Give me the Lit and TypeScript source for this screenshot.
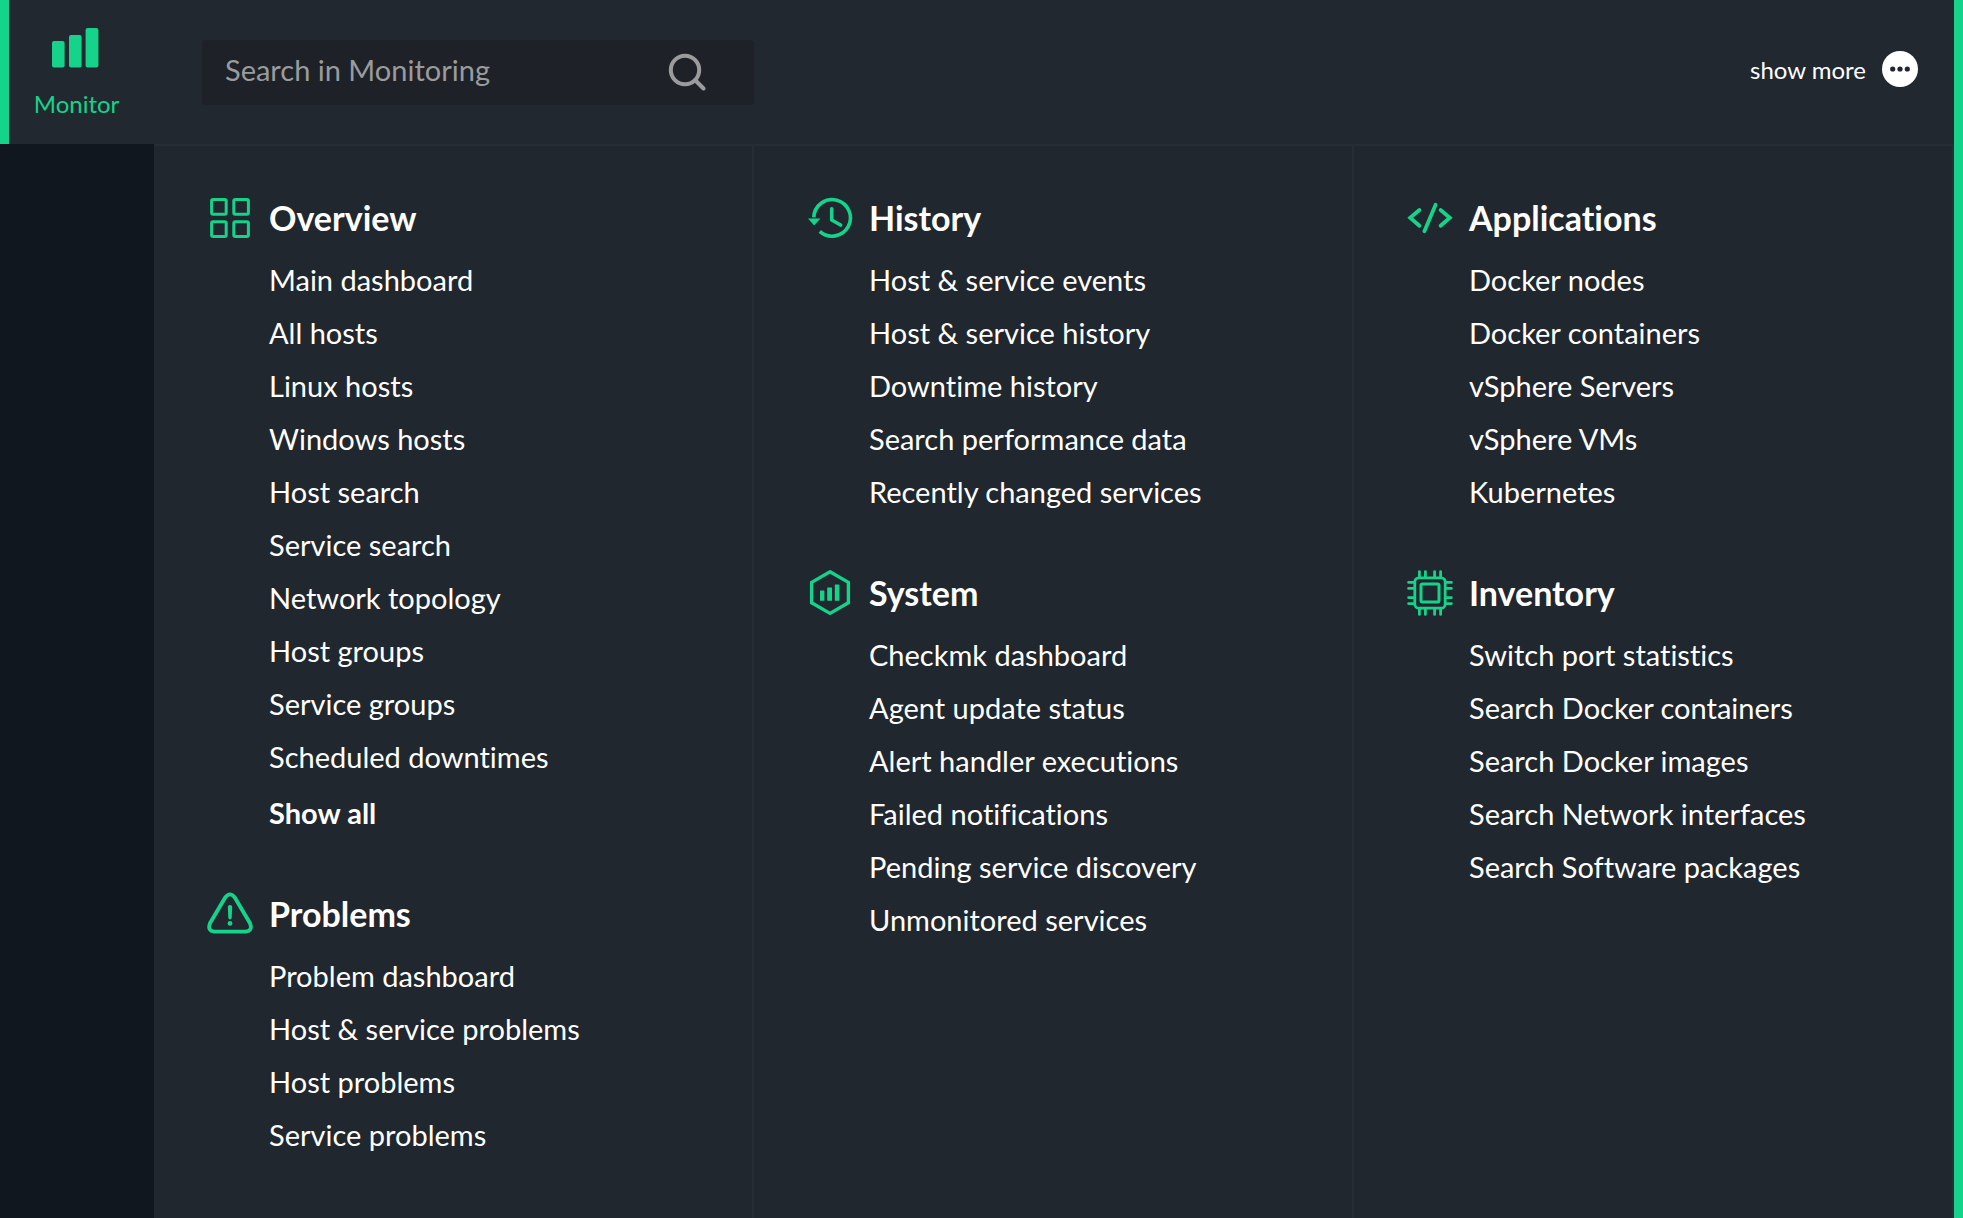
import { LitElement, html, css, svg, type SVGTemplateResult } from "lit";
import { customElement, property } from "lit/decorators.js";

interface Topic {
  title: string;
  icon: string;
  items: string[];
  showAll?: boolean;
}

const COLUMNS: Topic[][] = [
  [
    {
      title: "Overview",
      icon: "overview",
      items: [
        "Main dashboard",
        "All hosts",
        "Linux hosts",
        "Windows hosts",
        "Host search",
        "Service search",
        "Network topology",
        "Host groups",
        "Service groups",
        "Scheduled downtimes",
      ],
      showAll: true,
    },
    {
      title: "Problems",
      icon: "problems",
      items: ["Problem dashboard", "Host & service problems", "Host problems", "Service problems"],
    },
  ],
  [
    {
      title: "History",
      icon: "history",
      items: [
        "Host & service events",
        "Host & service history",
        "Downtime history",
        "Search performance data",
        "Recently changed services",
      ],
    },
    {
      title: "System",
      icon: "system",
      items: [
        "Checkmk dashboard",
        "Agent update status",
        "Alert handler executions",
        "Failed notifications",
        "Pending service discovery",
        "Unmonitored services",
      ],
    },
  ],
  [
    {
      title: "Applications",
      icon: "applications",
      items: ["Docker nodes", "Docker containers", "vSphere Servers", "vSphere VMs", "Kubernetes"],
    },
    {
      title: "Inventory",
      icon: "inventory",
      items: [
        "Switch port statistics",
        "Search Docker containers",
        "Search Docker images",
        "Search Network interfaces",
        "Search Software packages",
      ],
    },
  ],
];

const ICONS: Record<string, SVGTemplateResult> = {
  overview: svg`
    <g stroke-width="3">
      <rect x="4.6" y="4.6" width="14.6" height="14.6" rx="1.5" />
      <rect x="26.8" y="4.6" width="14.6" height="14.6" rx="1.5" />
      <rect x="4.6" y="26.8" width="14.6" height="14.6" rx="1.5" />
      <rect x="26.8" y="26.8" width="14.6" height="14.6" rx="1.5" />
    </g>`,
  problems: svg`
    <path stroke-width="3.8" d="M18.4 6.2 Q23 0.4 27.6 6.2 L43 32.2 Q46 39.8 38.6 40.6 H7.4 Q0 39.8 3 32.2 Z" />
    <path fill="currentColor" stroke="none" d="M20.8 15.8 Q20.8 14 23 14 Q25.2 14 25.2 15.8 L24.7 26.8 Q24.5 28.4 23 28.4 Q21.5 28.4 21.3 26.8 Z" />
    <circle cx="23" cy="32.4" r="2.4" fill="currentColor" stroke="none" />`,
  history: svg`
    <path stroke-width="3.6" d="M6.8 22.4 A18.3 18.3 0 1 1 12.8 36.4" />
    <path stroke-width="3.6" stroke-linecap="round" stroke-linejoin="round" d="M24.7 13.8 V25 L33.6 30" />
    <path fill="currentColor" stroke="none" d="M1 23.4 H13.4 L7.2 30.6 Z" />`,
  system: svg`
    <path stroke-width="3.4" d="M23 1.8 L41.4 12.4 V32.8 L23 43.4 L4.6 32.8 V12.4 Z" />
    <g fill="currentColor" stroke="none">
      <rect x="13" y="20.4" width="4.4" height="10.4" rx=".5" />
      <rect x="20.2" y="17.4" width="4.8" height="13.4" rx=".5" />
      <rect x="27.8" y="14.4" width="4.6" height="16.4" rx=".5" />
    </g>`,
  applications: svg`
    <g stroke-width="3.8" stroke-linecap="round" stroke-linejoin="miter">
      <path d="M12.4 15 L3.2 22.8 L12.4 30.8" />
      <path d="M33.6 15 L42.8 22.8 L33.6 30.8" />
      <path d="M28.6 9.8 L17.4 36.2" />
    </g>`,
  inventory: svg`
    <rect x="7.8" y="7.8" width="30.4" height="30.4" rx="4" stroke-width="2.8" />
    <rect x="14" y="14" width="18" height="18" rx="1.5" stroke-width="3" />
    <path stroke-width="2.8" stroke-linecap="round" d="M12.4 1.6 V7 M18.4 1.6 V7 M27.6 1.6 V7 M33.6 1.6 V7 M12.4 39 V44.4 M18.4 39 V44.4 M27.6 39 V44.4 M33.6 39 V44.4 M1.6 12.4 H7 M1.6 18.4 H7 M1.6 27.6 H7 M1.6 33.6 H7 M39 12.4 H44.4 M39 18.4 H44.4 M39 27.6 H44.4 M39 33.6 H44.4" />`,
};

@customElement("menu-topic")
export class MenuTopic extends LitElement {
  @property({ attribute: false }) topic!: Topic;

  static styles = css`
    :host {
      display: block;
    }
    .heading {
      display: flex;
      align-items: center;
      gap: 16px;
      height: 70px;
      margin: 0;
      font-size: 34px;
      font-weight: 700;
      line-height: 40px;
    }
    .icon {
      flex: none;
      width: 46px;
      height: 46px;
      color: #15d38a;
    }
    .list {
      margin: 0;
      padding: 0 0 0 62px;
      list-style: none;
    }
    .link {
      display: block;
      color: inherit;
      text-decoration: none;
      white-space: nowrap;
      line-height: 53px;
    }
    .link:hover {
      color: #15d38a;
    }
    .all {
      padding-top: 3px;
      font-weight: 700;
    }
  `;

  render() {
    const { title, icon, items, showAll } = this.topic;
    return html`
      <h2 class="heading">
        <svg class="icon" viewBox="0 0 46 46" fill="none" stroke="currentColor" aria-hidden="true">
          ${ICONS[icon]}
        </svg>
        <span>${title}</span>
      </h2>
      <ul class="list">
        ${items.map((item) => html`<li><a class="link" href="#">${item}</a></li>`)}
        ${showAll ? html`<li class="all"><a class="link" href="#">Show all</a></li>` : ""}
      </ul>
    `;
  }
}

@customElement("app-root")
export class AppRoot extends LitElement {
  static styles = css`
    :host {
      display: grid;
      grid-template-columns: 154px 1fr;
      grid-template-rows: auto 1fr;
      box-sizing: border-box;
      min-height: 100vh;
      border-right: 9px solid #15d38a;
      background: #21272e;
      color: #fff;
      font-family: Lato, "Liberation Sans", sans-serif;
      font-size: 29px;
      font-variant-ligatures: none;
    }
    .monitor {
      display: flex;
      flex-direction: column;
      align-items: center;
      gap: 20px;
      box-sizing: border-box;
      height: 144px;
      padding: 28px 10px 0 0;
      border: 0;
      border-left: 9px solid #15d38a;
      background: #21282f;
      color: #15d38a;
      font: inherit;
      font-size: 24px;
      font-variant-ligatures: none;
      line-height: 32px;
      cursor: pointer;
    }
    .bars {
      flex: none;
      width: 52px;
      height: 40px;
    }
    .header {
      display: flex;
      align-items: center;
      justify-content: space-between;
      height: 144px;
      padding: 0 36px 0 48px;
      box-sizing: border-box;
      background: #21282f;
    }
    .search {
      display: flex;
      align-items: center;
      box-sizing: border-box;
      width: 552px;
      height: 65px;
      padding: 0 48px 4px 23px;
      border-radius: 4px;
      background: #1e2228;
    }
    .field {
      flex: 1;
      min-width: 0;
      padding: 0;
      border: 0;
      outline: 0;
      background: none;
      color: #fff;
      font: inherit;
      line-height: 40px;
    }
    .field::placeholder {
      color: #9a9b9d;
      opacity: 1;
    }
    .find {
      display: flex;
      padding: 4px 0 0;
      border: 0;
      background: none;
      color: #9b9b9b;
      cursor: pointer;
    }
    .lens {
      width: 38px;
      height: 38px;
    }
    .more {
      display: flex;
      align-items: center;
      gap: 16px;
      padding: 0 0 6px;
      border: 0;
      background: none;
      color: #fff;
      font: inherit;
      font-size: 24px;
      line-height: 32px;
      cursor: pointer;
    }
    .label {
      padding-top: 2px;
    }
    .dots {
      width: 36px;
      height: 36px;
    }
    .rail {
      background: #10171e;
    }
    .columns {
      display: grid;
      grid-template-columns: repeat(3, 1fr);
      border-top: 2px solid #262d37;
    }
    .column {
      display: flex;
      flex-direction: column;
      gap: 40px;
      box-sizing: border-box;
      min-width: 0;
      padding: 37px 16px 37px 53px;
      border-right: 2px solid #262d37;
    }
  `;

  render() {
    return html`
      <button class="monitor" type="button">
        <svg class="bars" viewBox="0 0 52 40" fill="currentColor" aria-hidden="true">
          <rect x="1" y="13" width="12.6" height="26.4" rx="2" />
          <rect x="18" y="7" width="12.6" height="32.4" rx="2" />
          <rect x="34.6" y="0" width="12.8" height="39.4" rx="2" />
        </svg>
        <span>Monitor</span>
      </button>
      <header class="header">
        <form class="search" role="search" @submit=${(e: Event) => e.preventDefault()}>
          <input class="field" type="text" aria-label="Search in Monitoring" placeholder="Search in Monitoring" />
          <button class="find" type="submit" aria-label="Search">
            <svg class="lens" viewBox="0 0 38 38" fill="none" stroke="currentColor" stroke-width="4" aria-hidden="true">
              <circle cx="17" cy="17" r="14.2" />
              <path d="M27 27 L35.5 35.5" stroke-linecap="round" />
            </svg>
          </button>
        </form>
        <button class="more" type="button">
          <span class="label">show more</span>
          <svg class="dots" viewBox="0 0 36 36" aria-hidden="true">
            <circle cx="18" cy="18" r="18" fill="#fff" />
            <g fill="#21272e">
              <circle cx="10.7" cy="18" r="2.6" />
              <circle cx="18" cy="18" r="2.6" />
              <circle cx="25.3" cy="18" r="2.6" />
            </g>
          </svg>
        </button>
      </header>
      <div class="rail"></div>
      <main class="columns">
        ${COLUMNS.map(
          (topics) => html`
            <div class="column">
              ${topics.map((topic) => html`<menu-topic .topic=${topic}></menu-topic>`)}
            </div>
          `,
        )}
      </main>
    `;
  }
}
